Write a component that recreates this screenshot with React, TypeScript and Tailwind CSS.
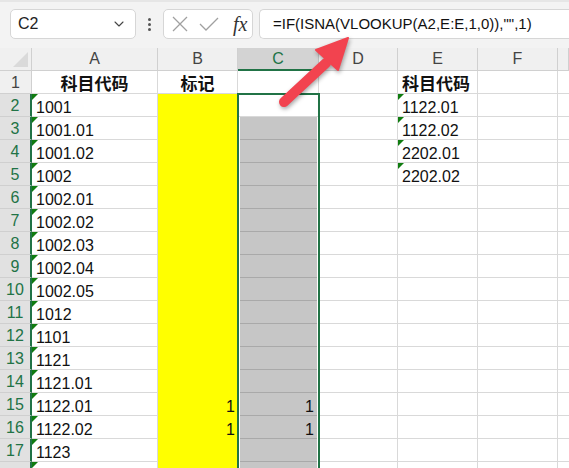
import { ChevronDown } from "lucide-react";

const colA = ["1001", "1001.01", "1001.02", "1002", "1002.01", "1002.02", "1002.03", "1002.04", "1002.05", "1012", "1101", "1121", "1121.01", "1122.01", "1122.02", "1123", ""];
const colE = ["1122.01", "1122.02", "2202.01", "2202.02"];
const letters = ["A", "B", "C", "D", "E", "F", ""];

function Tri() {
  return <span className="absolute left-0 top-0 w-0 h-0 border-t-[6px] border-r-[6px] border-t-[#107c10] border-r-transparent" />;
}

function TopBar() {
  return (
    <div className="h-[48px] bg-[#f3f3f3] border-t-[2px] border-[#e6e6e6] flex items-start pt-[7px] pl-[10px] gap-0">
      <div className="w-[126px] h-[30px] bg-white border border-[#d6d6d6] rounded-[5px] flex items-center justify-between pl-[7px] pr-[8px]">
        <span className="text-[16px] text-[#222]">C2</span>
        <ChevronDown size={16} strokeWidth={1.6} className="text-[#444]" />
      </div>
      <div className="w-[27px] h-[30px] flex flex-col items-center justify-center gap-[2px]">
        <span className="w-[3px] h-[3px] bg-[#555] rounded-full" />
        <span className="w-[3px] h-[3px] bg-[#555] rounded-full" />
        <span className="w-[3px] h-[3px] bg-[#555] rounded-full" />
      </div>
      <div className="w-[90px] h-[30px] bg-white border border-[#d6d6d6] rounded-[5px] flex items-center pl-[7px] gap-[10px]">
        <svg width="18" height="18" viewBox="0 0 18 18" fill="none" stroke="#a0a0a0" strokeWidth="1.3">
          <path d="M2 2 L16 16 M16 2 L2 16" />
        </svg>
        <svg width="20" height="16" viewBox="0 0 20 16" fill="none" stroke="#a0a0a0" strokeWidth="1.3">
          <path d="M1 8 L7 14 L19 2" />
        </svg>
        <span className="italic text-[20px] text-[#333] ml-[4px] leading-none" style={{ fontFamily: '"Liberation Serif", serif' }}>fx</span>
      </div>
      <div className="flex-1 h-[30px] ml-[6px] bg-white border border-[#d6d6d6] border-r-0 rounded-l-[5px] flex items-center pl-[13px]">
        <span className="text-[15px] text-[#111]">=IF(ISNA(VLOOKUP(A2,E:E,1,0)),"",1)</span>
      </div>
    </div>
  );
}

function Cell({ children, className = "", tri = false }: { children?: React.ReactNode; className?: string; tri?: boolean }) {
  return (
    <div className={`relative h-[23px] border-r border-b border-[#d9d9d9] flex items-end leading-[16px] text-[16px] text-[#111] overflow-hidden ${className}`}>
      {tri && <Tri />}
      {children}
    </div>
  );
}

export default function App() {
  const rows = Array.from({ length: 18 }, (_, i) => i + 1);
  return (
    <div className="w-[569px] h-[468px] overflow-hidden bg-white relative" style={{ fontFamily: '"Liberation Sans", "Noto Sans CJK SC", sans-serif' }}>
      <TopBar />
      <div className="grid grid-cols-[32px_126px_80px_81px_79px_80px_80px_1fr]">
        <div className="relative h-[23px] bg-[#f0f0f0] border-r border-b border-[#d0d0d0]">
          <span className="absolute right-[3px] bottom-[3px] w-0 h-0 border-b-[15px] border-l-[15px] border-b-[#dadada] border-l-transparent" />
        </div>
        {letters.map((l, i) => (
          <div
            key={i}
            className={`h-[23px] flex items-center justify-center text-[16px] border-r ${
              l === "C" ? "bg-[#d3d3d3] text-[#217346] border-b-[2px] border-b-[#217346] border-r-[#c0c0c0]" : "bg-[#f0f0f0] text-[#444] border-b border-[#d0d0d0]"
            }`}
          >
            {l}
          </div>
        ))}
        {rows.map((r) => {
          const sel = r >= 2;
          const a = r === 1 ? "科目代码" : colA[r - 2];
          const e = r === 1 ? "科目代码" : colE[r - 2];
          const one = r === 15 || r === 16;
          return [
            <div
              key={`h${r}`}
              className={`h-[23px] flex items-center justify-center text-[16px] pt-[1px] border-b ${
                sel ? "bg-[#e1e1e1] text-[#217346] border-b-[#cfcfcf] border-r-[2px] border-r-[#217346]" : "bg-[#f0f0f0] text-[#444] border-r border-[#d0d0d0]"
              }`}
            >
              {r <= 17 ? r : ""}
            </div>,
            <Cell key={`a${r}`} tri={sel} className={r === 1 ? "justify-center font-bold text-[17px]" : "pl-[4px]"}>
              {a}
            </Cell>,
            <Cell key={`b${r}`} className={r === 1 ? "justify-center font-bold text-[17px]" : "bg-[#ffff00] border-b-[#ffff00] justify-end pr-[2px]"}>
              {r === 1 ? "标记" : one ? "1" : ""}
            </Cell>,
            <Cell key={`c${r}`} className={r >= 3 ? "bg-[#c6c6c6] border-b-[#a9a9a9] justify-end pr-[3px] ml-[2px] mr-[2px] border-r-0" : ""}>
              {one ? "1" : ""}
            </Cell>,
            <Cell key={`d${r}`} />,
            <Cell key={`e${r}`} tri={!!e && r > 1} className={r === 1 ? "font-bold text-[17px] pl-[4px]" : "pl-[4px]"}>
              {e}
            </Cell>,
            <Cell key={`f${r}`} />,
            <Cell key={`g${r}`} className="border-r-0" />,
          ];
        })}
      </div>
      {/* selection outline C2:C */}
      <div className="absolute left-[237px] top-[93px] w-[83px] h-[400px] border-[2px] border-[#217346] pointer-events-none" />
      {/* callout arrow */}
      <svg className="absolute left-0 top-0 pointer-events-none" width="569" height="468" style={{ filter: "drop-shadow(1px 2px 2px rgba(0,0,0,0.35))" }}>
        <line x1="284" y1="102" x2="326" y2="63" stroke="#f2434f" strokeWidth="10" strokeLinecap="round" />
        <polygon points="348,38 316,50 338,70" fill="#f2434f" stroke="#f2434f" strokeWidth="2" strokeLinejoin="round" />
      </svg>
    </div>
  );
}
